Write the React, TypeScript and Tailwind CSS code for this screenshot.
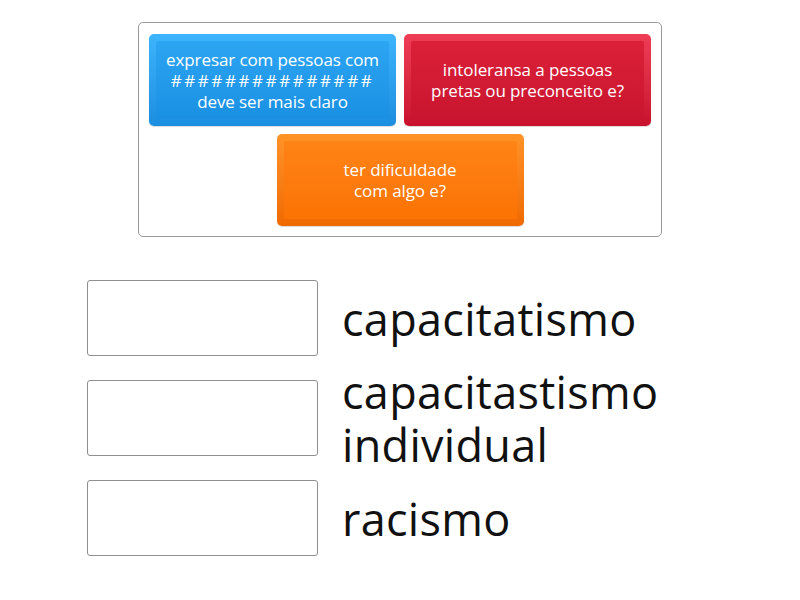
import React from "react";

const tiles = [
  {
    lines: ["expresar com pessoas com", "###############", "deve ser mais claro"],
    outer: "bg-gradient-to-b from-[#3db4fb] to-[#1b8ee0]",
    inner: "bg-gradient-to-b from-[#2ca5f3] to-[#1a90e2]",
  },
  {
    lines: ["intoleransa a pessoas", "pretas ou preconceito e?"],
    outer: "bg-gradient-to-b from-[#ef3d55] to-[#c8102c]",
    inner: "bg-gradient-to-b from-[#dc2039] to-[#c9152f]",
  },
];

const orange = {
  lines: ["ter dificuldade", "com algo e?"],
  outer: "bg-gradient-to-b from-[#ff9326] to-[#f06a00]",
  inner: "bg-gradient-to-b from-[#ff8316] to-[#fb7303]",
};

const targets = [["capacitatismo"], ["capacitastismo", "individual"], ["racismo"]];

const font = { fontFamily: "'Open Sans', Lato, sans-serif" };

function Tile({ lines, outer, inner }: { lines: string[]; outer: string; inner: string }) {
  return (
    <div className={`h-[92px] w-[247px] rounded-[5px] p-[7px] shadow-[0_1px_1px_rgba(0,0,0,0.15)] ${outer}`}>
      <div
        className={`flex h-full flex-col items-center justify-center rounded-[2px] text-center text-[17px] font-medium leading-[21px] text-white ${inner}`}
        style={font}
      >
        {lines.map((l) => (
          <span key={l} className={`whitespace-nowrap ${l.startsWith("#") ? "tracking-[2.6px]" : "tracking-[-0.1px]"}`}>
            {l}
          </span>
        ))}
      </div>
    </div>
  );
}

export default function App() {
  return (
    <main className="h-[600px] w-[800px] bg-white">
      <div className="flex justify-center pt-[22px]">
        <div className="flex w-[524px] flex-col items-center gap-2 rounded-[5px] border border-[#9a9a9a] px-[10px] pb-[10px] pt-[11px]">
          <div className="flex gap-2">
            {tiles.map((t) => (
              <Tile key={t.lines[0]} {...t} />
            ))}
          </div>
          <Tile {...orange} />
        </div>
      </div>

      <div className="mt-[43px] flex flex-col gap-6 pl-[87px]">
        {targets.map((lines) => (
          <div key={lines[0]} className="flex h-[76px] items-center gap-6">
            <div className="h-[76px] w-[231px] shrink-0 rounded-[3px] border border-[#8f8f8f]" />
            <div className="text-[45px] leading-[53px] tracking-[0.3px] text-[#111]" style={font}>
              {lines.map((l) => (
                <div key={l}>{l}</div>
              ))}
            </div>
          </div>
        ))}
      </div>
    </main>
  );
}
